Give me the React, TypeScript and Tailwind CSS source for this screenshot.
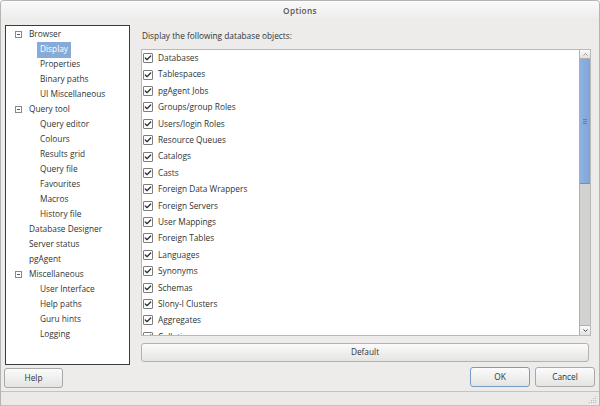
import { Check } from "lucide-react";

type TreeNode = { label: string; level: 0 | 1; toggle?: boolean; selected?: boolean };

const tree: TreeNode[] = [
  { label: "Browser", level: 0, toggle: true },
  { label: "Display", level: 1, selected: true },
  { label: "Properties", level: 1 },
  { label: "Binary paths", level: 1 },
  { label: "UI Miscellaneous", level: 1 },
  { label: "Query tool", level: 0, toggle: true },
  { label: "Query editor", level: 1 },
  { label: "Colours", level: 1 },
  { label: "Results grid", level: 1 },
  { label: "Query file", level: 1 },
  { label: "Favourites", level: 1 },
  { label: "Macros", level: 1 },
  { label: "History file", level: 1 },
  { label: "Database Designer", level: 0 },
  { label: "Server status", level: 0 },
  { label: "pgAgent", level: 0 },
  { label: "Miscellaneous", level: 0, toggle: true },
  { label: "User Interface", level: 1 },
  { label: "Help paths", level: 1 },
  { label: "Guru hints", level: 1 },
  { label: "Logging", level: 1 },
];

const objects = [
  "Databases",
  "Tablespaces",
  "pgAgent Jobs",
  "Groups/group Roles",
  "Users/login Roles",
  "Resource Queues",
  "Catalogs",
  "Casts",
  "Foreign Data Wrappers",
  "Foreign Servers",
  "User Mappings",
  "Foreign Tables",
  "Languages",
  "Synonyms",
  "Schemas",
  "Slony-I Clusters",
  "Aggregates",
  "Collations",
];

const btn =
  "flex items-center justify-center rounded-[3px] border bg-gradient-to-b from-[#fbfbfb] to-[#e4e4e3] text-[#2e3436]";

const App = () => {
  return (
    <div
      className="w-[600px] h-[406px] flex flex-col bg-[#edeceb] border-x border-t border-[#b4b4b3] rounded-t-[4px] overflow-hidden text-[8.3px] text-[#2e3436]"
      style={{ fontFamily: '"Open Sans", "Noto Sans", sans-serif' }}
    >
      {/* Title bar */}
      <div className="h-[20px] shrink-0 flex items-center justify-center bg-gradient-to-b from-[#fafafa] to-[#ecebea]">
        <span className="font-semibold text-[#555753] tracking-[0.3px]">Options</span>
      </div>

      <div className="flex flex-1 min-h-0">
        {/* Left column: tree + Help */}
        <div className="w-[130px] shrink-0 flex flex-col pl-[3px] pt-[4px]">
          <div className="ml-[1px] w-[125px] h-[340px] border border-[#3c3c3c] bg-white pt-[1px]">
            {tree.map((n) => (
              <div key={n.label} className="h-[15px] flex items-center leading-none">
                {n.level === 0 ? (
                  <>
                    <span className="w-[23px] shrink-0 flex justify-center pl-[1px]">
                      {n.toggle && (
                        <span className="w-[7px] h-[7px] border border-[#8a8a8a] flex items-center justify-center">
                          <span className="w-[3px] h-px bg-[#555]" />
                        </span>
                      )}
                    </span>
                    <span>{n.label}</span>
                  </>
                ) : (
                  <>
                    <span className="w-[31px] shrink-0" />
                    <span
                      className={
                        n.selected
                          ? "h-[16px] flex items-center px-[3px] bg-[#86abd9] text-white"
                          : "px-[3px]"
                      }
                    >
                      {n.label}
                    </span>
                  </>
                )}
              </div>
            ))}
          </div>
          <div className={`${btn} mt-[3px] w-[59px] h-[20px] border-[#a9a9a8]`}>Help</div>
        </div>

        {/* Right column */}
        <div className="flex-1 flex flex-col pl-[10px] pr-[3px]">
          <div className="h-[28px] flex items-center pl-[1px] pt-[2px]">
            Display the following database objects:
          </div>
          <div className="w-[450px] h-[287px] border border-[#b9b9b8] bg-white flex overflow-hidden">
            <div className="flex-1 overflow-hidden">
              {objects.map((o) => (
                <div key={o} className="h-[16.4px] flex items-center leading-none pl-[1px] shrink-0">
                  <span className="w-[10px] h-[10px] border border-[#7d7d7d] bg-white flex items-center justify-center rounded-[1px]">
                    <Check className="w-[8px] h-[8px] text-[#2e3436]" strokeWidth={4} />
                  </span>
                  <span className="ml-[5px]">{o}</span>
                </div>
              ))}
            </div>
            {/* Scrollbar */}
            <div className="w-[11px] flex flex-col border-l border-[#b0b0b0] bg-[#d2d2d1]">
              <div className="h-[9px] flex items-center justify-center bg-gradient-to-b from-[#fafafa] to-[#e2e2e2] border-b border-[#b0b0b0]">
                <svg width="5" height="3" viewBox="0 0 5 3">
                  <path d="M0.5 2.5 L2.5 0.5 L4.5 2.5" fill="none" stroke="#9a9a9a" strokeWidth="1" />
                </svg>
              </div>
              <div className="h-[125px] flex items-center justify-center bg-gradient-to-r from-[#8fb2e0] to-[#7fa5d8] border-b border-[#6d91c4]">
                <div className="flex flex-col gap-[1px]">
                  <span className="w-[4px] h-px bg-[#5b7fb3]" />
                  <span className="w-[4px] h-px bg-[#5b7fb3]" />
                  <span className="w-[4px] h-px bg-[#5b7fb3]" />
                </div>
              </div>
              <div className="flex-1" />
              <div className="h-[10px] flex items-center justify-center bg-gradient-to-b from-[#fafafa] to-[#e2e2e2] border-t border-[#b0b0b0]">
                <svg width="5" height="3" viewBox="0 0 5 3">
                  <path d="M0.5 0.5 L2.5 2.5 L4.5 0.5" fill="none" stroke="#444" strokeWidth="1" />
                </svg>
              </div>
            </div>
          </div>
          <div className={`${btn} mt-[7px] w-[448px] h-[19px] border-[#b3b3b2]`}>Default</div>
          <div className="flex justify-end gap-[5px] mt-[5px] pr-[1px]">
            <div className={`${btn} w-[60px] h-[20px] border-[#7a9bc8]`}>OK</div>
            <div className={`${btn} w-[60px] h-[20px] border-[#a9a9a8]`}>Cancel</div>
          </div>
        </div>
      </div>

      {/* Status bar */}
      <div className="h-[15px] shrink-0 border-t border-b border-[#c3c3c2] bg-[#ebeae9] flex justify-end items-end pr-[2px] pb-[1px]">
        <svg width="8" height="8" viewBox="0 0 8 8">
          <g fill="#b8b8b8">
            <rect x="6" y="0" width="1" height="1" />
            <rect x="4" y="2" width="1" height="1" />
            <rect x="6" y="2" width="1" height="1" />
            <rect x="2" y="4" width="1" height="1" />
            <rect x="4" y="4" width="1" height="1" />
            <rect x="6" y="4" width="1" height="1" />
            <rect x="0" y="6" width="1" height="1" />
            <rect x="2" y="6" width="1" height="1" />
            <rect x="4" y="6" width="1" height="1" />
            <rect x="6" y="6" width="1" height="1" />
          </g>
        </svg>
      </div>
    </div>
  );
};

export default App;
